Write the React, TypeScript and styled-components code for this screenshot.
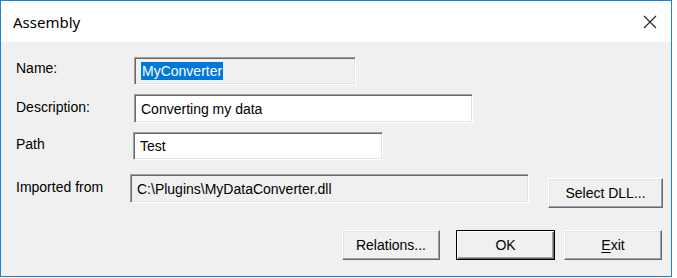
import React from "react";
import styled, { createGlobalStyle } from "styled-components";

const GlobalStyle = createGlobalStyle`
  html, body {
    margin: 0;
    padding: 0;
    background: #ffffff;
  }
  * {
    box-sizing: border-box;
  }
`;

//Window frame
const Window = styled.div`
  width: 672px;
  height: 277px;
  border: 1px solid #1883d7;
  display: flex;
  flex-direction: column;
  font-family: "Liberation Sans", Arial, sans-serif;
  font-size: 14px;
  color: #000;
`;

const TitleBar = styled.div`
  height: 41px;
  flex: none;
  background: #ffffff;
  display: flex;
  align-items: center;
  justify-content: space-between;
  padding: 0 9px 0 12px;
`;

const Title = styled.span`
  font-family: "Noto Sans", "Open Sans", sans-serif;
  font-size: 15px;
  color: #000;
`;

const CloseButton = styled.div`
  width: 24px;
  height: 24px;
  display: flex;
  align-items: center;
  justify-content: center;
`;

const Body = styled.div`
  flex: 1;
  background: #f0f0f0;
  padding: 15px 9px 0 15px;
  display: flex;
  flex-direction: column;
`;

//Rows
const Row = styled.div<{ $gap: number }>`
  display: flex;
  align-items: center;
  margin-top: ${(p) => p.$gap}px;
`;

const Label = styled.div<{ $width: number; $lift: number }>`
  width: ${(p) => p.$width}px;
  flex: none;
  padding-bottom: ${(p) => p.$lift}px;
  white-space: nowrap;
`;

const Field = styled.div<{ $width: number; $height: number; $readOnly?: boolean }>`
  width: ${(p) => p.$width}px;
  height: ${(p) => p.$height}px;
  flex: none;
  display: flex;
  align-items: center;
  padding-left: 6px;
  background: ${(p) => (p.$readOnly ? "#f0f0f0" : "#ffffff")};
  border-top: 1px solid #a0a0a0;
  border-left: 1px solid #a0a0a0;
  border-right: 1px solid #ffffff;
  border-bottom: 1px solid #ffffff;
  box-shadow: inset 1px 1px 0 #696969, inset -1px -1px 0 #e3e3e3;
  white-space: nowrap;
  overflow: hidden;
`;

const Selected = styled.span`
  background: #0078d7;
  color: #ffffff;
  padding: 1px 1px;
`;

const ImportRow = styled.div`
  display: flex;
  align-items: flex-start;
  margin-top: 14px;
`;

const ImportLabel = styled.div`
  width: 114px;
  flex: none;
  height: 29px;
  display: flex;
  align-items: center;
  padding-bottom: 4px;
`;

const ButtonRow = styled.div`
  display: flex;
  justify-content: flex-end;
  margin-top: 22px;
`;

const Button = styled.div<{ $width: number; $gap?: number; $top?: number; $default?: boolean }>`
  width: ${(p) => p.$width}px;
  height: 30px;
  margin-left: ${(p) => p.$gap ?? 0}px;
  margin-top: ${(p) => p.$top ?? 0}px;
  flex: none;
  display: flex;
  align-items: center;
  justify-content: center;
  background: #f0f0f0;
  border-top: 1px solid #ffffff;
  border-left: 1px solid #ffffff;
  border-right: 1px solid #696969;
  border-bottom: 1px solid #696969;
  box-shadow: inset -1px -1px 0 #a0a0a0, inset 1px 1px 0 #e3e3e3;
  ${(p) =>
    p.$default &&
    `
    border: 1px solid #000;
    box-shadow: inset 1px 1px 0 #ffffff, inset -1px -1px 0 #696969, inset -2px -2px 0 #a0a0a0;
  `}
  padding-bottom: 1px;
`;

const Mnemonic = styled.span`
  text-decoration: underline;
  text-underline-offset: 2px;
`;

const App = () => {
  return (
    <>
      <GlobalStyle />
      <Window>
        <TitleBar>
          <Title>Assembly</Title>
          <CloseButton>
            <svg width="14" height="14" viewBox="0 0 14 14">
              <path d="M1 1 L13 13 M13 1 L1 13" stroke="#222" strokeWidth="1.1" fill="none" />
            </svg>
          </CloseButton>
        </TitleBar>
        <Body>
          <Row $gap={0}>
            <Label $width={118} $lift={6}>Name:</Label>
            <Field $width={222} $height={28} $readOnly>
              <Selected>MyConverter</Selected>
            </Field>
          </Row>
          <Row $gap={9}>
            <Label $width={118} $lift={3}>Description:</Label>
            <Field $width={339} $height={29}>Converting my data</Field>
          </Row>
          <Row $gap={9}>
            <Label $width={117} $lift={4}>Path</Label>
            <Field $width={250} $height={28}>Test</Field>
          </Row>
          <ImportRow>
            <ImportLabel>Imported from</ImportLabel>
            <Field $width={399} $height={29} $readOnly>
              C:\Plugins\MyDataConverter.dll
            </Field>
            <Button $width={115} $gap={19} $top={4}>
              Select DLL...
            </Button>
          </ImportRow>
          <ButtonRow>
            <Button $width={98}>Relations...</Button>
            <Button $width={99} $gap={16} $default>
              OK
            </Button>
            <Button $width={98} $gap={9}>
              <Mnemonic>E</Mnemonic>xit
            </Button>
          </ButtonRow>
        </Body>
      </Window>
    </>
  );
};

export default App;
